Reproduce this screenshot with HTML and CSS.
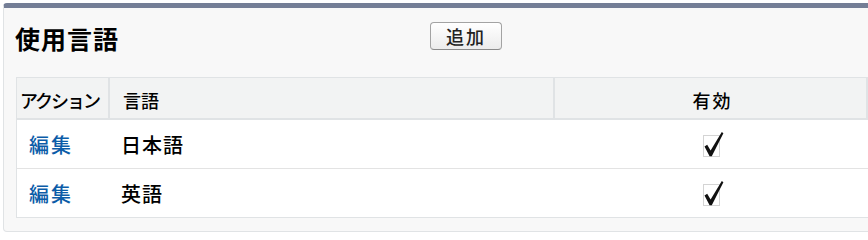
FILE: index.html
```html
<!DOCTYPE html>
<html lang="ja">
<head>
<meta charset="utf-8">
<title>使用言語</title>
<link rel="stylesheet" href="styles.css">
</head>
<body>
<div class="panel">
  <div class="head">
    <h2 class="title">使用言語</h2>
    <button class="btn" type="button">追加</button>
  </div>
  <table class="list">
    <thead>
      <tr>
        <th class="c-action">アクション</th>
        <th class="c-lang">言語</th>
        <th class="c-active">有効</th>
      </tr>
    </thead>
    <tbody>
      <tr>
        <td class="c-action"><a href="#" class="link">編集</a></td>
        <td class="c-lang">日本語</td>
        <td class="c-active">
          <svg class="check" width="22" height="28" viewBox="0 0 22 28" aria-label="チェック">
            <rect x="1.5" y="4.5" width="16" height="21" fill="none" stroke="#a8a8a8" stroke-width="1" stroke-dasharray="1 1"/>
            <path d="M2.5 15.5 L5.2 13.8 L8.6 19.6 L19.8 1 L21.4 2.2 L9.8 25.2 L7.6 25.2 Z" fill="#111"/>
          </svg>
        </td>
      </tr>
      <tr>
        <td class="c-action"><a href="#" class="link">編集</a></td>
        <td class="c-lang">英語</td>
        <td class="c-active">
          <svg class="check" width="22" height="28" viewBox="0 0 22 28" aria-label="チェック">
            <rect x="1.5" y="4.5" width="16" height="21" fill="none" stroke="#a8a8a8" stroke-width="1" stroke-dasharray="1 1"/>
            <path d="M2.5 15.5 L5.2 13.8 L8.6 19.6 L19.8 1 L21.4 2.2 L9.8 25.2 L7.6 25.2 Z" fill="#111"/>
          </svg>
        </td>
      </tr>
    </tbody>
  </table>
</div>
</body>
</html>
```
FILE: styles.css
```css
html, body {
  margin: 0;
  padding: 0;
  overflow: hidden;
  background: #ffffff;
}

body {
  font-family: "Noto Sans CJK JP", "Noto Sans", sans-serif;
  color: #000;
}

.panel {
  margin: 3px 0 0 3px;
  width: 880px;
  box-sizing: border-box;
  background: #f8f8f8;
  border: 1px solid #e0e3e5;
  border-top: 5px solid #747e96;
  border-radius: 4px;
  padding-bottom: 13px;
}

.head {
  display: grid;
  grid-template-columns: 415px auto;
  align-items: center;
  height: 58px;
  padding-left: 11px;
}

.title {
  margin: 3px 0 0;
  font-size: 25px;
  font-weight: bold;
  letter-spacing: 1px;
  line-height: 1;
  justify-self: start;
}

.btn {
  justify-self: start;
  width: 72px;
  height: 28px;
  margin-top: -2px;
  padding: 0;
  font-family: inherit;
  font-size: 18px;
  font-weight: 500;
  letter-spacing: 2px;
  line-height: 1;
  color: #222;
  background: linear-gradient(#ffffff, #ececec);
  border: 1px solid #a3a3a3;
  border-bottom-color: #8a8a8a;
  border-radius: 4px;
}

.list {
  margin: 11px 0 0 12px;
  width: 852px;
  border-collapse: separate;
  border-spacing: 0;
  border: 1px solid #e0e3e5;
  border-right: none;
  table-layout: fixed;
}

.list th {
  height: 42px;
  background: #f2f3f3;
  font-weight: 500;
  font-size: 18px;
  text-align: left;
  padding: 4px 0 0 13px;
  box-sizing: border-box;
  border-bottom: 2px solid #e0e3e5;
  white-space: nowrap;
}

.list th + th {
  border-left: 2px solid #e0e3e5;
}

.list th.c-action {
  width: 91px;
  padding-left: 3px;
  letter-spacing: -2px;
}

.list th.c-lang {
  width: 445px;
}

.list th.c-active {
  text-align: center;
  letter-spacing: 2px;
  padding-left: 4px;
  border-right: 2px solid #e0e3e5;
}

.list td {
  height: 48px;
  background: #ffffff;
  font-size: 20px;
  font-weight: 500;
  letter-spacing: 1px;
  padding: 0 0 0 13px;
  border-bottom: 1px solid #e3e3e3;
  vertical-align: middle;
}

.list tbody tr:last-child td {
  border-bottom: none;
}

.list td.c-action {
  padding-left: 12px;
}

.list td.c-active {
  text-align: center;
  padding: 0 0 0 4px;
}

.link {
  color: #0b5ca8;
  text-decoration: none;
  letter-spacing: 2px;
}

.check {
  display: inline-block;
  vertical-align: middle;
  margin-top: -4px;
}
```
